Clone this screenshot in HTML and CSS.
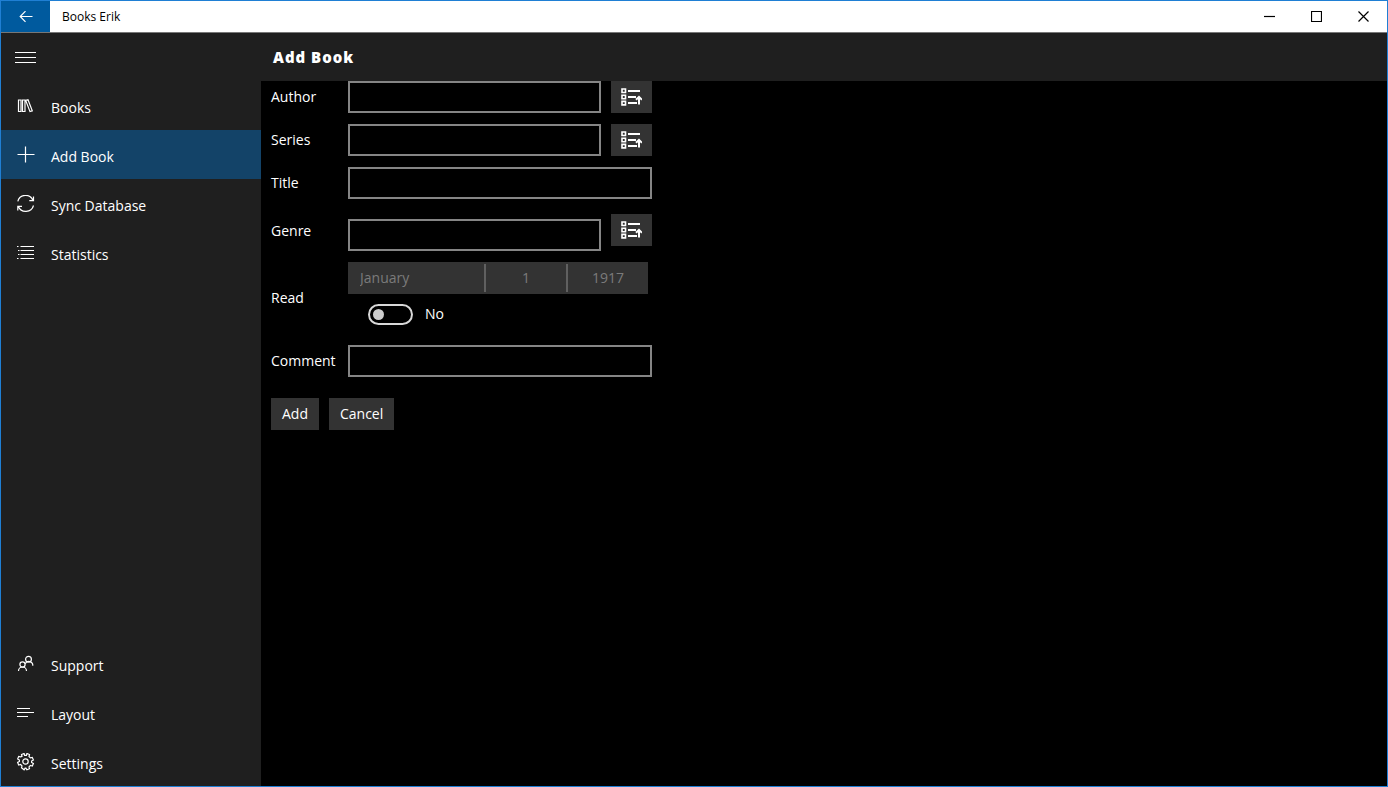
FILE: index.html
```html
<!DOCTYPE html>
<html lang="en">
<head>
    <meta charset="UTF-8">
    <title>Books Erik</title>
    <link rel="stylesheet" href="styles.css">
</head>
<body>
    <div class="window">
        <header class="titlebar">
            <button type="button" class="back" aria-label="Back">
                <svg width="14" height="12" viewBox="0 0 14 12"><path d="M13.5 5.5H1M6.5 .2L1.2 5.5l5.3 5.3"/></svg>
            </button>
            <span class="app-name">Books Erik</span>
            <button type="button" class="win-btn" aria-label="Minimize">
                <svg width="11" height="11" viewBox="0 0 11 11"><path d="M0 5.5h11"/></svg>
            </button>
            <button type="button" class="win-btn" aria-label="Maximize">
                <svg width="11" height="11" viewBox="0 0 11 11"><path d="M.5 .5h10v10H.5z"/></svg>
            </button>
            <button type="button" class="win-btn" aria-label="Close">
                <svg width="11" height="11" viewBox="0 0 11 11"><path d="M.5 .5l10 10M10.5 .5l-10 10"/></svg>
            </button>
        </header>
        <div class="body">
            <nav class="sidebar">
                <button type="button" class="menu-btn" aria-label="Menu">
                    <svg width="21" height="13" viewBox="0 0 21 13"><path d="M0 1.5h21M0 6.5h21M0 11.5h21"/></svg>
                </button>
                <a href="#" class="nav-item">
                    <svg width="18" height="18" viewBox="0 0 18 18"><path d="M1.5 3H4v11.5H1.5zM5.5 3H8v11.5H5.5zM8.7 3.4l2.3-.6 4.3 11-2.3.8z"/></svg>
                    <span>Books</span>
                </a>
                <a href="#" class="nav-item selected">
                    <svg width="18" height="18" viewBox="0 0 18 18"><path d="M8.5 .5v16M.5 8.5h17"/></svg>
                    <span>Add Book</span>
                </a>
                <a href="#" class="nav-item">
                    <svg width="18" height="18" viewBox="0 0 18 18"><path d="M.8 6.3A8 8 0 0 1 16 5.5M16.5 1.5v4.2h-4.2M16.5 10.5A8 8 0 0 1 1.3 11.3M.8 15.5v-4.2H5"/></svg>
                    <span>Sync Database</span>
                </a>
                <a href="#" class="nav-item">
                    <svg width="18" height="18" viewBox="0 0 18 18"><path d="M0 2.5h1.5M3.5 2.5H17M1 6.5h1.5M3.5 6.5H17M1 10.5h1.5M3.5 10.5H17M0 14.5h1.5M3.5 14.5H17"/></svg>
                    <span>Statistics</span>
                </a>
                <div class="spacer"></div>
                <a href="#" class="nav-item">
                    <svg width="18" height="18" viewBox="0 0 18 18"><circle cx="11.5" cy="4.2" r="2.9"/><circle cx="5.5" cy="9.5" r="2.6"/><path d="M8.2 8.8a4 4 0 0 1 7.6 2M1.5 16a4 4 0 0 1 8 0"/></svg>
                    <span>Support</span>
                </a>
                <a href="#" class="nav-item">
                    <svg width="18" height="18" viewBox="0 0 18 18"><path d="M0 4.5h13M0 8.5h17M0 12.5h11"/></svg>
                    <span>Layout</span>
                </a>
                <a href="#" class="nav-item">
                    <svg width="18" height="18" viewBox="0 0 18 18"><circle cx="8.5" cy="8.5" r="2.7"/><path d="M7.1 .5l.5 1.9h1.8L9.9 .5l2.6 1-.5 2 1.4 1.4 1.9-.5 1.1 2.6-1.8 1v1.4l1.8 1-1.1 2.6-1.9-.5-1.4 1.4.5 1.8-2.6 1.1-1-1.7H8.1l-1 1.7L4.5 14.7l.5-1.8L3.6 11.5l-1.9.5L.6 9.4l1.8-1V7L.6 6l1.1-2.6 1.9.5L5 3.4 4.5 1.5z"/></svg>
                    <span>Settings</span>
                </a>
            </nav>
            <main class="content">
                <h1 class="page-title">Add Book</h1>
                <form class="book-form">
                    <label for="author">Author</label>
                    <div class="field">
                        <input type="text" id="author">
                        <button type="button" class="pick-btn" aria-label="Pick author">
                            <svg width="21" height="18" viewBox="0 0 21 18"><path class="boxes" d="M1 1h3.5v3.500H1zM1 7.200h3.500v3.500H1zM1 13.400h3.500v3.500H1z"/><path d="M7 3h12M7 9h8M7 15h9M18 16.5V9M15 11.800l3-3 3 3"/></svg>
                        </button>
                    </div>

                    <label for="series">Series</label>
                    <div class="field">
                        <input type="text" id="series">
                        <button type="button" class="pick-btn" aria-label="Pick series">
                            <svg width="21" height="18" viewBox="0 0 21 18"><path class="boxes" d="M1 1h3.5v3.500H1zM1 7.200h3.500v3.500H1zM1 13.400h3.500v3.500H1z"/><path d="M7 3h12M7 9h8M7 15h9M18 16.5V9M15 11.800l3-3 3 3"/></svg>
                        </button>
                    </div>

                    <label for="title">Title</label>
                    <div class="field">
                        <input type="text" id="title">
                    </div>

                    <label for="genre" class="genre-label">Genre</label>
                    <div class="field genre">
                        <input type="text" id="genre">
                        <button type="button" class="pick-btn" aria-label="Pick genre">
                            <svg width="21" height="18" viewBox="0 0 21 18"><path class="boxes" d="M1 1h3.5v3.500H1zM1 7.200h3.500v3.500H1zM1 13.400h3.500v3.500H1z"/><path d="M7 3h12M7 9h8M7 15h9M18 16.5V9M15 11.800l3-3 3 3"/></svg>
                        </button>
                    </div>

                    <label for="read">Read</label>
                    <div class="read">
                        <div class="date">
                            <select class="month" aria-label="Month" disabled><option>January</option></select>
                            <select aria-label="Day" disabled><option>1</option></select>
                            <select aria-label="Year" disabled><option>1917</option></select>
                        </div>
                        <div class="toggle-row">
                            <input type="checkbox" class="toggle" id="read">
                            <label for="read">No</label>
                        </div>
                    </div>

                    <label for="comment">Comment</label>
                    <div class="field">
                        <input type="text" id="comment">
                    </div>

                    <div class="actions">
                        <button type="submit">Add</button>
                        <button type="button">Cancel</button>
                    </div>
                </form>
            </main>
        </div>
    </div>
</body>
</html>
```
FILE: styles.css
```css
*{
    box-sizing: border-box;
    margin: 0;
    padding: 0;
}
body{
    background: #000;
    color: #fff;
    font: 14px/20px "Open Sans", "Noto Sans", sans-serif;
}
button,input,select{
    font: inherit;
    color: inherit;
    border: 0;
    border-radius: 0;
}
svg{
    display: block;
    flex: none;
    fill: none;
    stroke: currentColor;
    stroke-width: 1.2;
}

.window{
    display: flex;
    flex-direction: column;
    min-height: 100vh;
    border: 1px solid #1f7fd4;
}

/* title bar */
.titlebar{
    display: flex;
    height: 32px;
    background: #fff;
    color: #000;
    border-bottom: 1px solid #777;
}
.titlebar button{
    display: flex;
    align-items: center;
    justify-content: center;
    background: none;
}
.titlebar .back{
    width: 49px;
    background: #005a9e;
    color: #fff;
}
.app-name{
    flex: 1;
    padding-left: 12px;
    font-size: 12px;
    line-height: 31px;
}
.titlebar .win-btn{
    width: 47px;
}

.body{
    display: flex;
    flex: 1;
}

/* sidebar */
.sidebar{
    display: flex;
    flex-direction: column;
    width: 260px;
    background: #1f1f1f;
}
.menu-btn{
    width: 49px;
    height: 48px;
    padding-left: 14px;
    background: none;
}
.nav-item{
    display: flex;
    align-items: center;
    gap: 16px;
    height: 49px;
    padding-left: 16px;
    color: #fff;
    text-decoration: none;
}
.nav-item span{
    padding-top: 4px;
}
.nav-item.selected{
    background: #134368;
}
.spacer{
    flex: 1;
}

/* page */
.content{
    flex: 1;
}
.page-title{
    height: 48px;
    padding-left: 12px;
    background: #1f1f1f;
    color: #fff;
    font-size: 15px;
    font-weight: 800;
    line-height: 48px;
    letter-spacing: 1px;
}
.book-form{
    display: grid;
    grid-template-columns: 67px 304px;
    gap: 11px 10px;
    align-items: center;
    padding-left: 10px;
}
.field{
    display: flex;
    gap: 10px;
}
.field input{
    flex: 1;
    min-width: 0;
    height: 32px;
    padding: 0 10px;
    background: #000;
    border: 2px solid #858585;
}
.pick-btn{
    display: flex;
    align-items: center;
    justify-content: center;
    width: 41px;
    height: 32px;
    background: #333;
}
.pick-btn svg{
    stroke-width: 2;
}
.pick-btn .boxes{
    stroke-width: 1.6;
}
.genre,.genre-label{
    margin-top: 4px;
}
.genre{
    height: 37px;
}
.genre input{
    align-self: flex-end;
}
.genre-label{
    padding-bottom: 4px;
}

.date{
    display: flex;
    width: 300px;
    height: 32px;
    background: #333;
}
.date select{
    flex: 1;
    height: 28px;
    margin: 2px 0;
    appearance: none;
    background: none;
    border-left: 2px solid #606060;
    color: #7b7b7b;
    opacity: 1;
    text-align: center;
    text-align-last: center;
}
.date .month{
    flex: none;
    width: 136px;
    padding-left: 12px;
    border: 0;
    text-align: left;
    text-align-last: left;
}
.toggle-row{
    display: flex;
    align-items: center;
    gap: 12px;
    height: 40px;
    padding-left: 20px;
}
.toggle{
    display: flex;
    align-items: center;
    width: 45px;
    height: 21px;
    padding-left: 3px;
    appearance: none;
    border: 2px solid #d8d8d8;
    border-radius: 11px;
}
.toggle::before{
    content: "";
    width: 11px;
    height: 11px;
    background: #ccc;
    border-radius: 50%;
}
.toggle:checked{
    justify-content: flex-end;
    padding: 0 3px 0 0;
    background: #0078d7;
}

.actions{
    grid-column: 1 / -1;
    display: flex;
    gap: 10px;
    margin-top: 10px;
}
.actions button{
    height: 32px;
    padding: 0 11px;
    background: #333;
}
```
